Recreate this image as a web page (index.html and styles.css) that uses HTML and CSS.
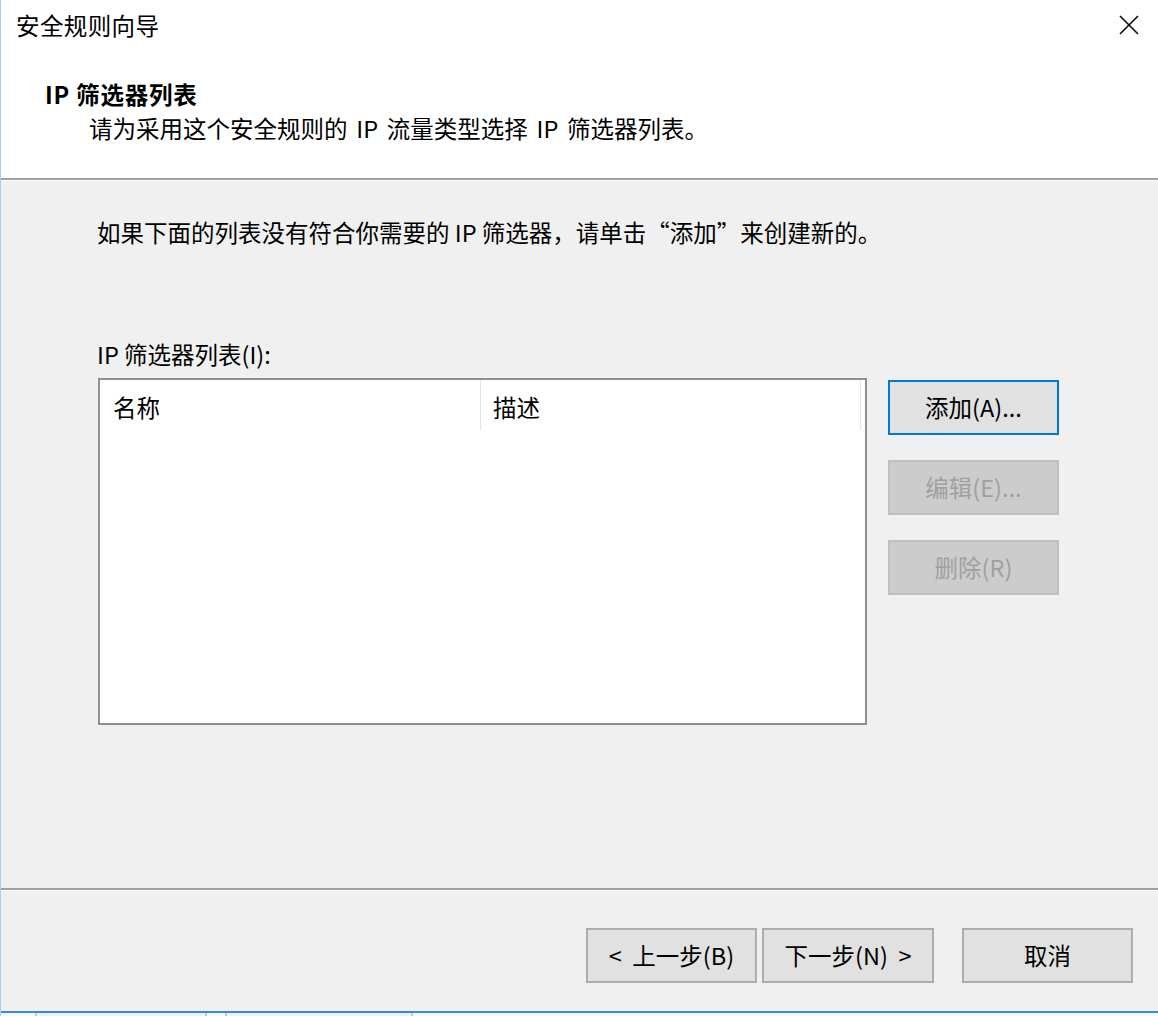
FILE: index.html
```html
<!DOCTYPE html>
<html lang="zh-CN">
<head>
<meta charset="utf-8">
<title>安全规则向导</title>
<link rel="stylesheet" href="styles.css">
</head>
<body>
<div class="window">
  <header class="header">
    <div class="titlebar">
      <span class="title">安全规则向导</span>
      <span class="close" aria-label="关闭">
        <svg width="20" height="20" viewBox="0 0 20 20"><path d="M1 1 L19 19 M19 1 L1 19" stroke="#111" stroke-width="1.7" fill="none"/></svg>
      </span>
    </div>
    <div class="heading">IP 筛选器列表</div>
    <div class="subtitle">请为采用这个安全规则的 IP 流量类型选择 IP 筛选器列表。</div>
  </header>
  <main class="content">
    <p class="intro">如果下面的列表没有符合你需要的 IP 筛选器，请单击“添加”来创建新的。</p>
    <div class="list-label">IP 筛选器列表(I):</div>
    <div class="list-row">
      <div class="listbox">
        <div class="list-head">
          <div class="col col-name">名称</div>
          <div class="col col-desc">描述</div>
        </div>
      </div>
      <div class="side-buttons">
        <button class="btn btn-default">添加(A)...</button>
        <button class="btn" disabled>编辑(E)...</button>
        <button class="btn" disabled>删除(R)</button>
      </div>
    </div>
  </main>
  <footer class="footer">
    <button class="btn btn-back">&lt;&nbsp; 上一步(B)</button>
    <button class="btn btn-next">下一步(N)&nbsp; &gt;</button>
    <button class="btn btn-cancel">取消</button>
  </footer>
  <div class="taskbar">
    <span class="tb-item tb-a"></span>
    <span class="tb-item tb-b"></span>
  </div>
</div>
</body>
</html>
```

FILE: styles.css
```css
* { box-sizing: border-box; }
html, body { margin: 0; padding: 0; }
body {
  width: 1158px;
  height: 1016px;
  overflow: hidden;
  background: #f0f0f0;
  font-family: "Noto Sans CJK SC", "Noto Sans", sans-serif;
  font-size: 23.5px;
  color: #000;
}
.window {
  width: 1158px;
  height: 1016px;
  display: flex;
  flex-direction: column;
  background: #f0f0f0;
  border-left: 1px solid #a9cdee;
}
.header {
  height: 180px;
  background: #fff;
  border-bottom: 2px solid #a0a0a0;
  flex: none;
}
.titlebar {
  height: 50px;
  display: flex;
  align-items: center;
  justify-content: space-between;
  padding-left: 15px;
  padding-right: 19px;
  line-height: 50px;
}
.title { letter-spacing: 0.4px; }
.close { display: flex; width: 20px; height: 20px; margin-top: -1px; }
.heading {
  margin-top: 27px;
  padding-left: 44px;
  line-height: 34px;
  font-weight: 700;
  letter-spacing: 0.8px;
}
.subtitle {
  padding-left: 88px;
  line-height: 34px;
  word-spacing: 3.5px;
}
.content {
  flex: none;
  height: 708px;
  border-top: 1px solid #fff;
  padding-top: 34px;
  padding-left: 96px;
}
.intro { margin: 0; line-height: 34px; }
.list-label { margin-top: 88px; line-height: 34px; }
.list-row {
  margin-top: 7px;
  margin-left: 1px;
  display: flex;
  gap: 21px;
  align-items: flex-start;
}
.listbox {
  width: 769px;
  height: 347px;
  background: #fff;
  border: 2px solid #8f8f8f;
}
.list-head { display: flex; height: 50px; }
.col {
  height: 50px;
  padding-top: 4px;
  line-height: 46px;
  border-right: 1px solid #e5e5e5;
}
.col-name { width: 381px; padding-left: 13px; }
.col-desc { width: 380px; padding-left: 12px; }
.side-buttons {
  margin-top: 2px;
  display: flex;
  flex-direction: column;
  gap: 25px;
}
.btn {
  width: 171px;
  height: 55px;
  font-family: inherit;
  font-size: 23.5px;
  color: #000;
  background: #e1e1e1;
  border: 2px solid #adadad;
  padding: 0;
  line-height: 51px;
  text-align: center;
}
.btn-default { border-color: #0078d7; }
.btn:disabled {
  background: #cccccc;
  border-color: #bfbfbf;
  color: #a0a0a0;
}
.footer {
  flex: none;
  height: 123px;
  border-top: 2px solid #a0a0a0;
  box-shadow: inset 0 1px 0 #fff;
  display: flex;
  justify-content: flex-end;
  align-items: flex-start;
  padding-top: 38px;
  padding-right: 25px;
}
.btn-next { margin-left: 5px; width: 172px; }
.btn-cancel { margin-left: 28px; }
.taskbar {
  flex: none;
  height: 5px;
  border-top: 2px solid #3c8ad0;
  background: #f4f6f8;
  position: relative;
}
.tb-item {
  position: absolute;
  top: 0;
  height: 3px;
  border-left: 2px solid #c8c8c8;
  border-right: 2px solid #c8c8c8;
  background: #eaf1f8;
}
.tb-a { left: 34px; width: 172px; }
.tb-b { left: 224px; width: 188px; }
```
